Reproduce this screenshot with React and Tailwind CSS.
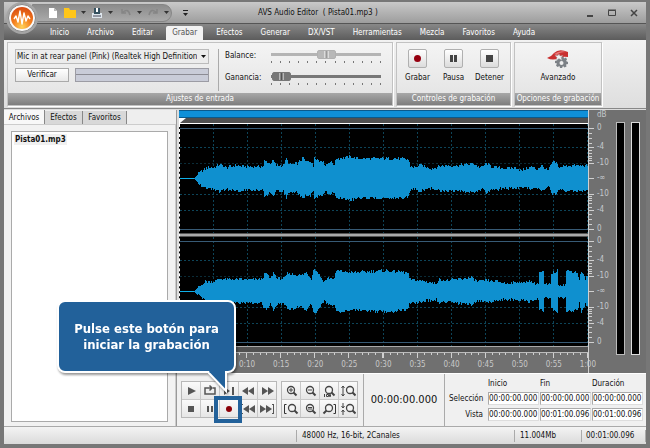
import { Fragment } from "react";

const menuItems = ["Inicio", "Archivo", "Editar", "Grabar", "Efectos", "Generar", "DX/VST", "Herramientas", "Mezcla", "Favoritos", "Ayuda"];

// [x, amplitude] pairs, x from 0 to 408
const LEFT_CHANNEL = [
  [14, 0], [19, 5], [27, 10], [33, 10], [39, 13], [46, 10], [56, 12], [66, 11], [83, 11], [84, 17], [89, 14], [93, 17],
  [96, 12], [103, 12], [106, 19], [109, 13], [117, 14], [123, 20], [125, 16], [130, 17], [133, 11], [134, 21], [139, 16],
  [141, 18], [145, 12], [149, 16], [154, 13], [156, 19], [166, 20], [171, 21], [176, 19], [201, 19], [221, 19], [228, 18],
  [230, 11], [236, 10], [239, 13], [244, 11], [251, 9], [256, 10], [261, 12], [276, 12], [293, 14], [296, 12], [301, 10],
  [306, 14], [311, 11], [326, 9], [336, 10], [341, 7], [351, 11], [356, 8], [361, 12], [368, 7], [372, 15], [376, 15],
  [378, 10], [386, 12], [391, 12], [406, 12], [408, 11],
];
const RIGHT_CHANNEL = [
  [14, 0], [25, 9], [34, 9], [39, 12], [56, 11], [81, 11], [84, 16], [86, 17], [90, 12], [93, 18], [97, 12], [104, 12],
  [107, 17], [121, 15], [126, 18], [131, 12], [133, 21], [137, 19], [141, 12], [144, 9], [148, 13], [154, 12], [156, 20],
  [171, 18], [206, 20], [226, 18], [228, 17], [229, 11], [239, 10], [251, 8], [256, 7], [258, 11], [266, 10], [276, 11],
  [291, 13], [297, 9], [306, 10], [316, 9], [326, 7], [339, 9], [342, 7], [348, 10], [355, 7], [358, 7], [359, 18],
  [363, 19], [364, 6], [370, 6], [371, 17], [377, 20], [378, 6], [385, 6], [386, 20], [392, 19], [397, 18], [399, 11],
  [401, 20], [405, 11], [408, 17],
];

function wavePath(points, seed) {
  const noise = (n) => {
    const v = Math.sin(n * 12.9898 + seed * 78.233) * 43758.5453;
    return v - Math.floor(v);
  };
  const level = (x) => {
    const i = points.findIndex((p) => p[0] > x);
    if (i === 0) return 0;
    if (i < 0) return points[points.length - 1][1];
    const [x0, y0] = points[i - 1];
    const [x1, y1] = points[i];
    return y0 + ((y1 - y0) * (x - x0)) / (x1 - x0);
  };
  const top = [];
  const bottom = [];
  for (let x = 14; x < 408; x += 1) {
    const l = level(x);
    const up = Math.round(l + (l > 2 ? noise(x) * 3 - 1 : 0));
    const down = Math.round(l + (l > 2 ? noise(x + 500) * 3 - 1.5 : 0));
    top.push(`L${x} ${54 - up}H${x + 1}`);
    bottom.unshift(`L${x + 1} ${55 + down}H${x}`);
  }
  return `M14 54${top.join("")}${bottom.join("")}Z`;
}

function Channel({ points, seed }) {
  return (
    <svg className="block h-[109px] w-full bg-black" viewBox="0 0 408 109" preserveAspectRatio="none" shapeRendering="crispEdges">
      <g stroke="#0d4458" strokeDasharray="2 2">
        {Array.from({ length: 12 }, (_, i) => (
          <path key={i} d={`M${33.5 + i * 34} 0V109`} />
        ))}
        <path d="M0 23.5H408M0 70.5H408M0 86.5H408" />
        <path d="M0 39.5H408" stroke="#0a2c38" />
      </g>
      <path d="M0 4.5H408M0 105.5H408" stroke="#375a75" />
      <path d="M0 54.5H20" stroke="#0fb0e8" />
      <path d={wavePath(points, seed)} fill="#0f90cf" />
    </svg>
  );
}

function DbScale() {
  return (
    <div className="relative h-[109px] w-5 text-[8px] leading-[8px] text-[#c4c8cc]">
      <svg className="block h-[109px] w-5" viewBox="0 0 20 109" shapeRendering="crispEdges">
        <path
          d="M0 4.5H5M0 23.5H5M0 39.5H5M0 54.5H5M0 70.5H5M0 86.5H5M0 105.5H5M0 9.5H3M0 14.5H3M0 19.5H3M0 26.5H3M0 29.5H3M0 32.5H3M0 34.5H3M0 36.5H3M0 72.5H3M0 74.5H3M0 76.5H3M0 79.5H3M0 83.5H3M0 90.5H3M0 95.5H3M0 100.5H3"
          stroke="#d0d0d0"
        />
      </svg>
      <div className="absolute inset-y-0 left-2 flex flex-col">
        <span className="mb-[11px]">0</span>
        <span className="mb-[8px]">-4</span>
        <span className="mb-[7px]">-10</span>
        <span className="mb-[8px]">-∞</span>
        <span className="mb-[8px]">-10</span>
        <span className="mb-[11px]">-4</span>
        <span>0</span>
      </div>
    </div>
  );
}

function Slider({ id, label, value, muted }) {
  return (
    <div className="flex items-start">
      <label htmlFor={id} className="w-[46px] text-[8px] leading-[13px]">{label}</label>
      <div className="w-[110px]">
        <input
          id={id}
          type="range"
          defaultValue={value}
          className={
            "block h-[10px] w-full appearance-none bg-transparent [&::-webkit-slider-runnable-track]:h-[3px] [&::-webkit-slider-thumb]:-mt-[3px] [&::-webkit-slider-thumb]:h-[9px] [&::-webkit-slider-thumb]:w-[19px] [&::-webkit-slider-thumb]:appearance-none [&::-webkit-slider-thumb]:rounded-xs [&::-webkit-slider-thumb]:border " +
            (muted
              ? "[&::-webkit-slider-runnable-track]:bg-[#b4b4b4] [&::-webkit-slider-thumb]:border-[#b0b0b0] [&::-webkit-slider-thumb]:bg-[linear-gradient(90deg,#b8b8b8_35%,#e8e8e8_36%,#999_50%,#e8e8e8_64%,#b8b8b8_65%)]"
              : "[&::-webkit-slider-runnable-track]:bg-[#777] [&::-webkit-slider-thumb]:border-[#777] [&::-webkit-slider-thumb]:bg-[linear-gradient(90deg,#777_35%,#ccc_36%,#555_50%,#ccc_64%,#777_65%)]")
          }
        />
        <div className="mt-[2px] flex justify-between">
          {Array.from({ length: 13 }, (_, i) => (
            <span key={i} className="h-[2px] w-px bg-[#777]" />
          ))}
        </div>
      </div>
    </div>
  );
}

function RibbonGroup({ title, className, children }) {
  return (
    <section className={`flex h-[64px] flex-col border border-[#c2c2c2] bg-linear-to-b from-[#f4f4f4] to-[#e2e2e2] shadow-[1px_1px_0_#fff] ${className}`}>
      <div className="flex-1">{children}</div>
      <h2 className="h-[12px] bg-linear-to-b from-[#a8a8a8] to-[#7e7e7e] text-center text-[8px] leading-[12px] whitespace-nowrap text-white">
        {title}
      </h2>
    </section>
  );
}

function RecordControl({ label, children }) {
  return (
    <button className="flex w-[36px] flex-col items-center gap-[4px] text-[8px] leading-[12px]">
      <span className="flex h-[19px] w-[19px] items-center justify-center rounded-xs border border-[#b0b0b0] bg-linear-to-b from-white to-[#dcdcdc]">
        <svg width="11" height="11" viewBox="0 0 11 11">{children}</svg>
      </span>
      {label}
    </button>
  );
}

const Lens = ({ children, cx = 8 }) => (
  <>
    <circle cx={cx} cy="7" r="3.5" fill="#f4f4f4" stroke="#444" strokeWidth="1.3" />
    <path d={`M${cx + 2.5} 9.5l3 3`} stroke="#444" strokeWidth="2" />
    {children}
  </>
);

const transport = [
  ["Reproducir", <path d="M5 4v8l8-4z" />],
  ["Bucle", <path d="M6 5H3v6h10V5h-2M6 5h3M7.500 2.500L10 5 7.500 7.500" fill="none" stroke="#555" strokeWidth="1.500" />],
  ["Reproducir hasta el final", <path d="M3 4v8l6-4zM11 4h2v8h-2z" />],
  ["Rebobinar", <path d="M8 4v8L2 8zM14 4v8L8 8z" />],
  ["Avanzar", <path d="M3 4v8l6-4zM9 4v8l6-4z" />],
  ["Detener reproducción", <path d="M5 5h6v6H5z" />],
  ["Pausar", <path d="M5 5h2v6H5zM9 5h2v6H9z" />],
  ["Iniciar grabación", <circle cx="8" cy="8" r="3" fill="#8b0008" />],
  ["Ir al inicio", <path d="M1 3h2v1H2v8h1v1H1zM9 4v8L3 8zM15 4v8L9 8z" />],
  ["Ir al final", <path d="M1 4v8l6-4zM7 4v8l6-4zM13 3h2v10h-2v-1h1V4h-1z" />],
];

const zoomTools = [
  ["Acercar", <Lens><path d="M6 7h4M8 5v4" stroke="#444" /></Lens>],
  ["Alejar", <Lens><path d="M6 7h4" stroke="#444" /></Lens>],
  ["Zoom 100", <Lens><path d="M3.500 11v3M5.500 11.500h2v2h-2zM8.500 11.500h1v2h-1z" stroke="#444" fill="none" /></Lens>],
  ["Acercar vertical", <Lens cx={10}><path d="M3 3v10M1.500 5L3 3l1.500 2M1.500 11L3 13l1.500-2" stroke="#444" fill="none" /></Lens>],
  ["Zoom al inicio", <Lens cx={9}><path d="M3.500 3.500h-2v9h2" stroke="#333" fill="none" /></Lens>],
  ["Zoom a la selección", <Lens><path d="M6 6.500h4M6 8h4" stroke="#444" /></Lens>],
  ["Zoom al final", <><circle cx="8" cy="7" r="3.5" fill="#f4f4f4" stroke="#444" strokeWidth="1.3" /><path d="M5.500 9.500l-3 3" stroke="#444" strokeWidth="2" /><path d="M12.500 3.500h2v9h-2" stroke="#333" fill="none" /></>],
  ["Alejar vertical", <Lens cx={10}><path d="M3 2v5M1.500 5L3 7l1.500-2M3 14V9M1.500 11L3 9l1.500 2" stroke="#444" fill="none" /></Lens>],
];

function ToolGrid({ items, className }) {
  return (
    <div className={`grid gap-px border border-[#b8b8b8] bg-[#c8c8c8] ${className}`}>
      {items.map(([label, icon]) => (
        <button key={label} aria-label={label} className="flex h-[17px] w-[18px] items-center justify-center bg-linear-to-b from-[#fafafa] to-[#e6e6e6]">
          <svg width="16" height="16" viewBox="0 0 16 16" fill="#555">{icon}</svg>
        </button>
      ))}
    </div>
  );
}

function Caret({ className }) {
  return (
    <svg className={className} width="5" height="3" viewBox="0 0 5 3" fill="currentColor">
      <path d="M0 0h5L2.500 3z" />
    </svg>
  );
}

function TitleBar() {
  return (
    <header className="relative flex h-[22px] items-center border-b border-[#555] bg-linear-to-b from-[#c9c9c9] to-[#9d9d9d]">
      <div className="ml-[28px] flex h-[18px] w-[140px] items-center rounded-r-full border border-[#858585] bg-linear-to-b from-[#8c8c8c] to-[#aaa] pl-4 text-[#333]">
        <button aria-label="Nuevo" className="mr-[7px]">
          <svg width="8" height="10" viewBox="0 0 8 10"><path d="M0 0h5l3 3v7H0z" fill="#fff" /><path d="M5 0v3h3" fill="#bbb" /></svg>
        </button>
        <button aria-label="Abrir" className="mr-[5px]">
          <svg width="12" height="10" viewBox="0 0 12 10"><path d="M0 0h5l1 2h6v8H0z" fill="#ffc61a" /></svg>
        </button>
        <Caret className="mr-[6px]" />
        <button aria-label="Guardar" className="mr-[6px]">
          <svg width="10" height="10" viewBox="0 0 10 10"><path d="M0 5h10v5H0z" fill="#dfe7ee" /><path d="M2 0h6v6H2z" fill="#34505f" /><path d="M4 0h2v4H4z" fill="#fff" /><path d="M1 8h8" stroke="#445" /></svg>
        </button>
        <Caret className="mr-[8px]" />
        <button aria-label="Deshacer" className="mr-[6px]">
          <svg width="10" height="7" viewBox="0 0 10 7" fill="none" stroke="#858585" strokeWidth="1.5"><path d="M1 0v4h4M1 4q6-6 8 2" /></svg>
        </button>
        <Caret className="mr-[6px]" />
        <button aria-label="Rehacer" className="mr-[6px]">
          <svg width="10" height="7" viewBox="0 0 10 7" fill="none" stroke="#858585" strokeWidth="1.5"><path d="M9 0v4H5M9 4Q3-2 1 6" /></svg>
        </button>
        <Caret />
      </div>
      <svg className="ml-[11px]" width="5" height="6" viewBox="0 0 5 6"><path d="M0 0h5v1H0zM0 3h5L2.500 6z" fill="#222" /></svg>
      <h1 className="ml-[70px] flex-1 text-[8px] whitespace-pre">AVS Audio Editor  ( Pista01.mp3 )</h1>
      <div className="mr-[8px] flex items-center gap-[14px]">
        <button aria-label="Minimizar"><svg width="8" height="8" viewBox="0 0 8 8"><path d="M1 6h6v2H1z" fill="#444" /></svg></button>
        <button aria-label="Maximizar"><svg width="8" height="8" viewBox="0 0 8 8"><path d="M.5 1.500h7v5h-7zM0 1h8" fill="none" stroke="#444" /></svg></button>
        <button aria-label="Cerrar"><svg width="8" height="8" viewBox="0 0 8 8"><path d="M1 1l6 6M7 1L1 7" stroke="#444" strokeWidth="1.5" /></svg></button>
      </div>
      <button aria-label="Menú principal" className="absolute -top-px left-px">
        <svg width="34" height="34" viewBox="0 0 34 34">
          <defs>
            <radialGradient id="orb" cx="0.5" cy="0.9" r="0.9">
              <stop offset="0" stopColor="#ffd35a" />
              <stop offset="0.45" stopColor="#f58220" />
              <stop offset="1" stopColor="#d84a10" />
            </radialGradient>
          </defs>
          <circle cx="17" cy="17" r="16" fill="#a5a5a5" />
          <circle cx="17" cy="17" r="13.5" fill="#fafafa" stroke="#888" />
          <circle cx="17" cy="17" r="11" fill="url(#orb)" />
          <path d="M9 18l2-3 2 6 2-11 2 13 2-11 2 8 2-5 2 3" fill="none" stroke="#fff" strokeWidth="1.4" strokeLinejoin="round" />
        </svg>
      </button>
    </header>
  );
}

function Ribbon() {
  return (
    <div className="flex h-[69px] gap-[3px] border-b border-[#888] bg-linear-to-b from-[#f2f2f2] to-[#dedede] px-[3px] pt-[2px]">
      <RibbonGroup title="Ajustes de entrada" className="w-[386px]">
        <div className="flex pt-[6px] pl-[7px]">
          <div className="w-[196px]">
            <div className="relative w-[194px]">
              <select aria-label="Dispositivo de entrada" className="block h-[15px] w-full appearance-none overflow-hidden border border-[#bbb] bg-[#ececec] pr-[11px] pl-px text-[8px] leading-[13px]">
                <option>Mic in at rear panel (Pink) (Realtek High Definition Audio)</option>
              </select>
              <Caret className="pointer-events-none absolute top-[6px] right-[3px]" />
            </div>
            <div className="mt-[4px] flex gap-[6px]">
              <button className="h-[14px] w-[54px] border border-[#aaa] bg-linear-to-b from-white to-[#e8e8e8] text-[8px] leading-[12px]">Verificar</button>
              <div className="grid h-[14px] w-[134px] grid-rows-2 divide-y divide-[#8c8c94] border border-[#9c9ca4] bg-[#c9ccd8]">
                <span />
                <span />
              </div>
            </div>
          </div>
          <div className="ml-[7px] h-[42px] border-l border-[#aaa] pl-[6px]">
            <div className="flex flex-col gap-[8px]">
              <Slider id="balance" label="Balance:" value={50} muted />
              <Slider id="ganancia" label="Ganancia:" value={1} />
            </div>
          </div>
        </div>
      </RibbonGroup>
      <RibbonGroup title="Controles de grabación" className="w-[115px]">
        <div className="flex justify-center pt-[6px]">
          <RecordControl label="Grabar"><circle cx="5.500" cy="5.500" r="3.500" fill="#960010" /></RecordControl>
          <RecordControl label="Pausa"><path d="M2 2h3v7H2zM6 2h3v7H6z" fill="#444" /></RecordControl>
          <RecordControl label="Detener"><path d="M2 2h7v7H2z" fill="#444" /></RecordControl>
        </div>
      </RibbonGroup>
      <RibbonGroup title="Opciones de grabación" className="w-[88px]">
        <button className="mx-auto flex flex-col items-center gap-[3px] pt-[7px] text-[8px] leading-[12px]">
          <svg width="22" height="19" viewBox="0 0 22 19">
            <path d="M11 8.500h3l.5-2h2l.5 2 2-1 1 2-1 1.500 2 1v2l-2 .5.5 2-2 1-1.500-1.500-1 2h-2l-.5-2-2 1-1.500-1.500 1-2-2-.5v-2l2-.5z" fill="#7c8186" />
            <circle cx="14.500" cy="13" r="2" fill="#eee" />
            <path d="M0 8Q4 7 7 3q5-5 14-1v5q-5-1-9 1-6 3-12 0z" fill="#c93030" />
            <path d="M7 4q6-4 12-2-7 0-9 3z" fill="#e87878" />
            <path d="M12 4l1 2 3-.5-2 2 1 3-3-2-3 2 1-3-2-2h3z" fill="#f2f4f6" stroke="#999" strokeWidth=".4" />
          </svg>
          Avanzado
        </button>
      </RibbonGroup>
    </div>
  );
}

function FilePanel() {
  return (
    <aside className="flex w-[173px] flex-col border-r border-[#999] bg-[#eee]">
      <div role="tablist" className="flex h-[14px] items-end text-[8px] leading-[13px]">
        <button role="tab" aria-selected="true" className="h-[14px] w-[41px] border-r border-[#888] bg-[#f8f8f8]">Archivos</button>
        <button role="tab" className="h-[13px] w-[38px] border-r border-[#888] bg-[#d8d8d8]">Efectos</button>
        <button role="tab" className="h-[13px] w-[44px] border-r border-[#888] bg-[#d8d8d8]">Favoritos</button>
      </div>
      <div className="flex flex-1 border-t border-r border-[#ccc] bg-[#f2f2f2] px-[7px] pt-[6px] pb-[4px]">
        <ul className="flex-1 border border-[#aaa] bg-white p-[2px]">
          <li className="w-fit bg-[#f0f0f0] px-px text-[8px] leading-[11px] font-bold">Pista01.mp3</li>
        </ul>
      </div>
    </aside>
  );
}

function WaveView() {
  return (
    <section className="flex h-[263px] border-l-2 border-[#ddd] bg-[#707070]">
      <div className="min-w-0 flex-1">
        <div className="h-[8px] border-y border-[#0a5a8c] bg-[#0f90d8]" />
        <div className="flex h-[6px] border-b border-white bg-[#505050]">
          <svg width="7" height="5" viewBox="0 0 7 5"><path d="M0 0h7L1 5H0z" fill="#fff" /></svg>
        </div>
        <div className="border-l border-dashed border-white bg-black">
          <Channel points={LEFT_CHANNEL} seed={1} />
          <div className="h-[4px] border-y border-[#555] bg-[#aaa]" />
          <Channel points={RIGHT_CHANNEL} seed={2} />
        </div>
        <div className="h-[7px] border-t border-b border-t-[#aaa] border-b-[#bbb] bg-[#505050]" />
        <svg className="block h-[5px] w-full" viewBox="0 0 408 5" preserveAspectRatio="none" shapeRendering="crispEdges" stroke="#d0d0d0">
          {Array.from({ length: 60 }, (_, i) => (
            <path key={i} d={`M${Math.round(6.8 * (i + 1)) - 0.5} 0v${i % 5 === 4 ? 5 : 2}`} />
          ))}
        </svg>
        <div className="-mr-[17px] ml-[17px] grid grid-cols-12 pt-[2px] text-center text-[8px] leading-[9px] text-[#c8c8c8]">
          {["0:05", "0:10", "0:15", "0:20", "0:25", "0:30", "0:35", "0:40", "0:45", "0:50", "0:55", "1:00"].map((t) => (
            <span key={t}>{t}</span>
          ))}
        </div>
      </div>
      <div className="w-[28px] border-l border-[#d0d0d0]">
        <div className="h-[14px] pt-px pl-[8px] text-[8px] leading-[8px] text-[#c4c8cc]">dB</div>
        <DbScale />
        <div className="h-[4px]" />
        <DbScale />
      </div>
      <div className="mt-[12px] mr-[6px] flex h-[233px] gap-[6px]">
        <div className="w-[9px] border border-[#bbb] bg-black" />
        <div className="w-[9px] border border-[#ddd] bg-black" />
      </div>
    </section>
  );
}

function TimeFields() {
  const rows = [
    ["Selección", ["00:00:00.000", "00:00:00.000", "00:00:00.000"]],
    ["Vista", ["00:00:00.000", "00:01:00.096", "00:01:00.096"]],
  ];
  const columns = ["Inicio", "Fin", "Duración"];
  return (
    <div className="grid grid-cols-[38px_51px_51px_51px] content-start gap-x-px gap-y-[3px] pt-[5px] text-[8px] leading-[10px]">
      <span />
      {columns.map((c) => (
        <span key={c}>{c}</span>
      ))}
      {rows.map(([label, values]) => (
        <Fragment key={label}>
          <span className="pr-[4px] text-right leading-[13px]">{label}</span>
          {values.map((v, i) => (
            <input key={i} readOnly aria-label={`${label} ${columns[i]}`} value={v} className="h-[13px] w-full min-w-0 border border-[#aaa] border-r-[#ddd] border-b-[#ddd] bg-white" />
          ))}
        </Fragment>
      ))}
    </div>
  );
}

function BottomPanel() {
  return (
    <section className="flex flex-1 border-t border-white bg-[#f0f0f0]">
      <div className="flex flex-1 gap-[4px] pt-[7px] pl-[4px]">
        <div className="relative h-fit">
          <ToolGrid items={transport} className="grid-cols-[repeat(5,18px)]" />
          <div className="pointer-events-none absolute top-[15px] left-[33px] h-[27px] w-[28px] border-4 border-[#22619a]" />
          <Callout />
        </div>
        <ToolGrid items={zoomTools} className="h-fit grid-cols-[repeat(4,18px)]" />
      </div>
      <output className="flex w-[82px] items-center justify-center border-x border-[#aaa] text-[11px]">00:00:00.000</output>
      <div className="w-[201px] pl-[4px]">
        <TimeFields />
      </div>
    </section>
  );
}

function Callout() {
  return (
    <div className="absolute bottom-[45px] -left-[124px] w-[179px] drop-shadow-[1px_2px_1px_rgba(0,0,0,0.4)]">
      <p className="flex h-[73px] items-center justify-center rounded-lg border-2 border-white bg-[#22619a] text-center text-[13px] leading-[16px] font-bold text-white">
        Pulse este botón para
        <br />
        iniciar la grabación
      </p>
      <svg className="absolute top-[71px] left-[151px]" width="20" height="22" viewBox="0 0 20 22">
        <path d="M0 1L18 20V1" fill="#22619a" stroke="#fff" strokeWidth="2" />
        <path d="M1 0h16v2H2z" fill="#22619a" />
      </svg>
    </div>
  );
}

export default function App() {
  return (
    <div className="flex min-h-screen flex-col border-x-4 border-t-2 border-b-4 border-[#777] bg-[#eee] font-['DejaVu_Sans_Condensed','DejaVu_Sans',sans-serif] text-[#111]">
      <TitleBar />
      <nav className="flex h-[16px] items-end bg-linear-to-b from-[#888] to-[#5c5c5c] pl-[37px] text-[8px] leading-[14px] text-white">
        {menuItems.map((item) => (
          <a key={item} href="#" className={item === "Grabar" ? "mx-[4px] rounded-t-xs bg-[#f2f2f2] px-[6px] text-[#555]" : "px-[9px]"}>
            {item}
          </a>
        ))}
      </nav>
      <Ribbon />
      <main className="flex flex-1 border-t border-[#ddd]">
        <FilePanel />
        <div className="flex min-w-0 flex-1 flex-col">
          <WaveView />
          <BottomPanel />
        </div>
      </main>
      <footer className="flex h-[18px] items-center border-t border-[#aaa] bg-linear-to-b from-[#f4f4f4] to-[#dadada] text-[8px]">
        <div className="ml-[292px] flex-1 border-l border-[#aaa] pl-[5px]">48000 Hz, 16-bit, 2Canales</div>
        <div className="w-[67px] border-l border-[#aaa] pl-[5px]">11.004Mb</div>
        <div className="w-[65px] border-x border-[#aaa] pl-[4px]">00:01:00.096</div>
      </footer>
    </div>
  );
}
